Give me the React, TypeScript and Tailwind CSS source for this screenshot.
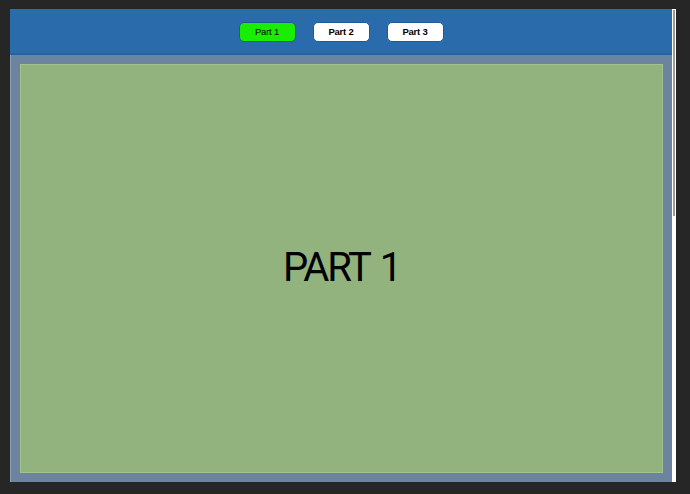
export default function App() {
  const parts = ['Part 1', 'Part 2', 'Part 3'];
  const active = 0;

  return (
    <div className="h-[494px] w-[690px] bg-[#262626] pt-[9px] pl-[10px] pr-[14px] pb-[12px] flex font-['Liberation_Sans',sans-serif]">
      <div className="flex-1 flex flex-col">
        <header className="h-[46px] bg-[#2a6cab] border-b-2 border-[#2462a0] flex items-center justify-center gap-[17px] pt-[2px]">
          {parts.map((p, i) => (
            <button
              key={p}
              className={`w-[57px] h-[20px] rounded-[5px] border border-[#1d5a96] text-[9.5px] text-black tracking-[-0.2px] ${
                i === active ? 'bg-[#19ee00] font-normal' : 'bg-white font-bold'
              }`}
            >
              {p}
            </button>
          ))}
        </header>
        <main className="flex-1 bg-[#6c84a0] border-l border-[#8fa0b4] p-[9px]">
          <div className="h-full bg-[#93b37e] border border-[#a4c28c] flex items-center justify-center">
            <span className="text-[40px] tracking-[-2.2px] [word-spacing:3px] text-black font-['Roboto',sans-serif] leading-none mb-[1px]">
              PART 1
            </span>
          </div>
        </main>
      </div>
      <div className="w-[4px] bg-white flex flex-col">
        <div className="h-[206px] mt-[1px] mx-[1px] bg-[#9a9a9a]" />
      </div>
    </div>
  );
}
